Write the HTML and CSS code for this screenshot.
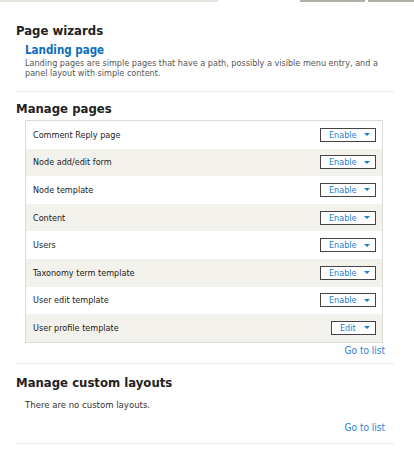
FILE: index.html
```html
<!DOCTYPE html>
<html>
<head>
<meta charset="utf-8">
<link rel="stylesheet" href="styles.css">
</head>
<body>
<div class="topstrip">
  <div class="seg seg-left"></div>
  <div class="seg seg-tab1"></div>
  <div class="seg seg-tab2"></div>
</div>
<div class="content">
  <section class="block block-wizards">
    <h2>Page wizards</h2>
    <div class="wizard">
      <a class="wizard-title" href="#">Landing page</a>
      <p class="desc">Landing pages are simple pages that have a path, possibly a visible menu entry, and a panel layout with simple content.</p>
    </div>
  </section>
  <section class="block block-pages">
    <h2>Manage pages</h2>
    <div class="table">
      <div class="row"><span class="name">Comment Reply page</span><span class="btn">Enable<i class="caret"></i></span></div>
      <div class="row alt"><span class="name">Node add/edit form</span><span class="btn">Enable<i class="caret"></i></span></div>
      <div class="row"><span class="name">Node template</span><span class="btn">Enable<i class="caret"></i></span></div>
      <div class="row alt"><span class="name">Content</span><span class="btn">Enable<i class="caret"></i></span></div>
      <div class="row"><span class="name">Users</span><span class="btn">Enable<i class="caret"></i></span></div>
      <div class="row alt"><span class="name">Taxonomy term template</span><span class="btn">Enable<i class="caret"></i></span></div>
      <div class="row"><span class="name">User edit template</span><span class="btn">Enable<i class="caret"></i></span></div>
      <div class="row alt"><span class="name">User profile template</span><span class="btn btn-edit">Edit<i class="caret"></i></span></div>
    </div>
    <div class="more"><a href="#">Go to list</a></div>
  </section>
  <section class="block block-layouts">
    <h2>Manage custom layouts</h2>
    <p class="empty">There are no custom layouts.</p>
    <div class="more"><a href="#">Go to list</a></div>
  </section>
</div>
</body>
</html>
```
FILE: styles.css
```css
* { box-sizing: border-box; }
body {
  margin: 0;
  background: #fff;
  font-family: "DejaVu Sans Condensed", "DejaVu Sans", sans-serif;
  color: #333;
}
.topstrip {
  display: flex;
  height: 2px;
}
.seg { height: 2px; }
.seg-left { width: 218px; background: #e4e4de; }
.seg-tab1 { margin-left: 82px; width: 65px; background: #b0b0a8; }
.seg-tab2 { margin-left: 3px; flex: 1; background: #b0b0a8; }
.content {
  padding: 0 20px 0 16px;
}
.block {
  border-bottom: 1px solid #ebebeb;
}
h2 {
  margin: 0;
  font-size: 13px;
  font-weight: bold;
  color: #222;
  line-height: 16px;
}
.block-wizards h2 { padding-top: 21px; }
.block-pages h2 { padding-top: 9px; }
.block-layouts h2 { padding-top: 11px; }
.wizard { padding: 3px 0 13px 9px; }
.wizard-title {
  display: block;
  font-size: 11.5px;
  font-weight: bold;
  color: #0a6ebd;
  text-decoration: none;
  line-height: 16px;
}
.desc {
  margin: 0;
  font-size: 9px;
  line-height: 10px;
  color: #555;
}
.table {
  margin: 3px 11px 0 9px;
  border: 1px solid #dcdcd6;
}
.row {
  display: flex;
  align-items: center;
  justify-content: space-between;
  height: 27.6px;
  padding: 0 6px 0 7px;
  font-size: 9px;
  color: #222;
}
.row.alt { background: #f2f1eb; }
.btn {
  display: flex;
  align-items: center;
  justify-content: space-between;
  width: 56px;
  height: 14px;
  border: 1px solid #444;
  background: #fff;
  color: #1e7fd0;
  padding: 0 5px 0 8px;
  font-size: 9px;
}
.btn-edit { width: 45px; }
.caret {
  width: 0; height: 0;
  border-left: 3px solid transparent;
  border-right: 3px solid transparent;
  border-top: 3px solid #1e7fd0;
}
.more {
  text-align: right;
  padding: 2px 9px 6px 0;
  font-size: 10px;
  line-height: 12px;
}
.more a { color: #2a7fd4; text-decoration: none; }
.empty {
  margin: 8px 0 0 9px;
  font-size: 9.5px;
  color: #333;
  line-height: 12px;
}
.block-layouts .more { padding-top: 11px; padding-bottom: 9px; }
```
